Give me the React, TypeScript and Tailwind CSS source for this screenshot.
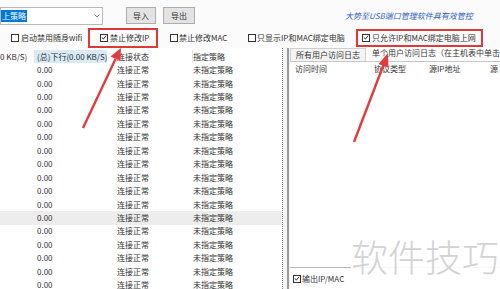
import React from "react";

const font = { fontFamily: '"Noto Sans CJK SC", "Liberation Sans", sans-serif' };

function Cb({ checked }: { checked?: boolean }) {
  return (
    <span className="inline-flex w-[8px] h-[8px] border border-[#333] bg-white shrink-0 items-center justify-center">
      {checked && (
        <svg width="7" height="7" viewBox="0 0 7 7">
          <path d="M1 3.6 L2.8 5.3 L6 1.4" fill="none" stroke="#222" strokeWidth="1.1" />
        </svg>
      )}
    </span>
  );
}

export default function App() {
  const rows = Array.from({ length: 17 }, (_, i) => i);
  return (
    <div
      className="relative w-[500px] h-[289px] overflow-hidden bg-white text-[8px] leading-none text-[#333]"
      style={font}
    >
      {/* top row */}
      <div className="h-[27px] flex items-start pt-[7px] bg-[#fbfbfb]">
        <div className="w-[103px] h-[18px] border border-[#b9b9b9] bg-white flex items-center pl-0 pr-[2px]">
          <span className="bg-[#0078d7] text-white h-[12px] px-[1px] flex items-center whitespace-nowrap">上策略</span>
          <span className="flex-1" />
          <svg width="6" height="4" viewBox="0 0 6 4">
            <path d="M0.5 0.5 L3 3 L5.5 0.5" fill="none" stroke="#777" strokeWidth="0.9" />
          </svg>
        </div>
        <div className="ml-[23px] w-[30px] h-[17px] bg-[#e3e3e3] border border-[#adadad] flex items-center justify-center">导入</div>
        <div className="ml-[7px] w-[32px] h-[17px] bg-[#e3e3e3] border border-[#adadad] flex items-center justify-center">导出</div>
        <div className="ml-[150px] mt-[3px] flex-1 whitespace-nowrap italic text-[#2f5fc4] text-[8px] leading-[12px]">
          大势至USB端口管理软件具有效管控
        </div>
      </div>

      {/* checkbox row */}
      <div className="h-[21px] flex items-center bg-[#fbfbfb]">
        <div className="pl-[11px] w-[88px] flex items-center gap-[1px] whitespace-nowrap">
          <Cb />
          <span className="ml-[1px]">启动禁用随身wifi</span>
        </div>
        <div className="w-[70px] h-[20px] border-2 border-[#dc3a36] flex items-center pl-[10px] gap-[2px] whitespace-nowrap">
          <Cb checked />
          <span>禁止修改IP</span>
        </div>
        <div className="pl-[12px] w-[90px] flex items-center gap-[1px] whitespace-nowrap">
          <Cb />
          <span>禁止修改MAC</span>
        </div>
        <div className="w-[108px] flex items-center gap-[1px] whitespace-nowrap">
          <Cb />
          <span>只显示IP和MAC绑定电脑</span>
        </div>
        <div className="w-[127px] h-[18px] border-2 border-[#dc3a36] flex items-center pl-[4px] gap-[2px] whitespace-nowrap">
          <Cb checked />
          <span>只允许IP和MAC绑定电脑上网</span>
        </div>
      </div>

      {/* main */}
      <div className="flex h-[241px]">
        {/* left table */}
        <div className="w-[290px] pt-[2px] bg-white">
          <div className="flex h-[13.44px] items-center whitespace-nowrap">
            <div className="w-[35px] overflow-hidden border-r border-[#e6e6e6] h-full flex items-center">0 KB/S)</div>
            <div className="w-[72px] h-full bg-[#d9eaf8] flex items-center pl-[2px] overflow-hidden">(总)下行(0.00 KB/S)</div>
            <div className="w-[10px] h-full border-r border-[#e6e6e6]" />
            <div className="w-[76px] h-full flex items-center border-r border-[#e6e6e6]">连接状态</div>
            <div className="flex-1 h-full flex items-center pl-[0px]">指定策略</div>
          </div>
          {rows.map((i) => (
            <div
              key={i}
              className={`flex h-[13.44px] items-center whitespace-nowrap ${i === 11 ? "bg-[#ededed]" : ""}`}
            >
              <div className="w-[35px]" />
              <div className="w-[82px] pl-[2px]">0.00</div>
              <div className="w-[76px]">连接正常</div>
              <div className="flex-1">未指定策略</div>
            </div>
          ))}
        </div>

        {/* splitter */}
        <div className="w-[8px] flex bg-[#f4f4f4]">
          <div className="w-[1px] border-l border-dotted border-[#8c8c8c]" />
          <div className="w-[4px]" />
          <div className="w-[2px] bg-[#9a9a9a]" />
        </div>

        {/* right panel */}
        <div className="flex-1 flex flex-col bg-white">
          <div className="h-[14px] flex items-end border-b border-[#c8c8c8] whitespace-nowrap overflow-hidden">
            <div className="w-[76px] h-[13px] shrink-0 border border-b-0 border-[#cfcfcf] bg-[#f4f4f4] flex items-center pl-[5px]">
              所有用户访问日志
            </div>
            <div className="pl-[6px] h-[14px] flex items-center pb-[3px]">单个用户访问日志（在主机表中单击</div>
          </div>
          <div className="h-[206px] border-b border-[#b5b5b5] flex flex-col">
            <div className="h-[14px] flex items-center whitespace-nowrap">
              <div className="w-[84px] pl-[5px]">访问时间</div>
              <div className="w-[55px]">协议类型</div>
              <div className="w-[61px]">源IP地址</div>
              <div>源</div>
            </div>
          </div>
          <div className="flex-1 flex items-center pl-[3px] gap-[1px] whitespace-nowrap">
            <Cb checked />
            <span>输出IP/MAC</span>
          </div>
        </div>
      </div>

      {/* watermark */}
      <div className="absolute left-[351px] top-[224px] w-[149px] h-[65px] bg-white/90 flex items-center">
        <span className="text-[37px] leading-none text-[#d3d3d3] font-light whitespace-nowrap">软件技巧</span>
      </div>

      {/* arrows */}
      <svg className="absolute left-0 top-0 pointer-events-none" width="500" height="289">
        <line x1="83" y1="128" x2="115.5" y2="59" stroke="#e23b3f" strokeWidth="2.4" />
        <polygon points="121,48 120.5,61 110.5,56.5" fill="#e23b3f" />
        <line x1="354" y1="142" x2="383.5" y2="65" stroke="#e23b3f" strokeWidth="2.4" />
        <polygon points="388,53 388.4,67.6 378.6,64" fill="#e23b3f" />
      </svg>
    </div>
  );
}
